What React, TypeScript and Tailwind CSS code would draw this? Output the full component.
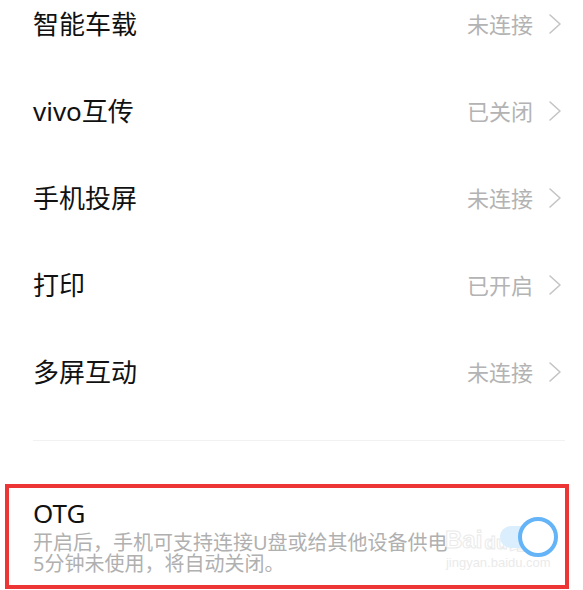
import React from "react";

const rows = [
  { title: "智能车载", value: "未连接" },
  { title: "vivo互传", value: "已关闭" },
  { title: "手机投屏", value: "未连接" },
  { title: "打印", value: "已开启" },
  { title: "多屏互动", value: "未连接" },
];

const font = { fontFamily: '"Noto Sans", "Noto Sans CJK SC", sans-serif' };

function Chevron() {
  return (
    <svg width="15" height="22" viewBox="0 0 15 22" className="shrink-0">
      <path d="M2 2 L12 11 L2 20" fill="none" stroke="#c4c4c4" strokeWidth="1.6" strokeLinecap="round" strokeLinejoin="round" />
    </svg>
  );
}

export default function App() {
  return (
    <div className="w-[583px] h-[590px] overflow-hidden bg-white" style={font}>
      <div className="-mt-[20px]">
        {rows.map((r) => (
          <div key={r.title} className="h-[87px] flex items-center pl-[33px] pr-[20px]">
            <div className="flex-1 text-[26px] leading-none text-[#111]">{r.title}</div>
            <div className="text-[22px] leading-none text-[#b3b3b3] mr-[15px]">{r.value}</div>
            <Chevron />
          </div>
        ))}
      </div>
      <div className="h-[25px]" />
      <div className="ml-[33px] mr-[18px] h-px bg-[#f1f1f1]" />
      <div className="h-[43px]" />
      <div className="relative ml-[5px] w-[564px] h-[105px] border-4 border-[#ee3535] flex items-start pl-[24px] pt-[10px]">
        <div className="flex-1 min-w-0">
          <div className="text-[26px] leading-[30px] text-[#111]">OTG</div>
          <div className="mt-[4px] text-[20px] leading-[21px] text-[#b0b0b0] whitespace-nowrap">
            开启后，手机可支持连接U盘或给其他设备供电
            <br />
            5分钟未使用，将自动关闭。
          </div>
        </div>
        <div className="absolute left-[436px] top-[40px] pointer-events-none flex flex-col items-center opacity-60">
          <div className="flex items-end text-[24px] leading-none font-bold text-white [-webkit-text-stroke:1px_#dddddd]" style={{ fontFamily: '"Liberation Sans", "Noto Sans CJK SC", sans-serif' }}>
            <span>Bai</span>
            <span className="text-[19px] mx-[2px]">du</span>
            <span className="text-[21px]">经验</span>
          </div>
          <div className="mt-[4px] text-[13px] leading-none text-[#dddddd]" style={{ fontFamily: '"Liberation Sans", sans-serif' }}>
            jingyan.baidu.com
          </div>
        </div>
        <div className="relative shrink-0 mt-[19px] mr-[7px] w-[66px] h-[40px] flex items-center">
          <div className="absolute left-[8px] right-[12px] h-[22px] rounded-full bg-[#dbeefd]" />
          <div className="absolute right-0 w-[40px] h-[40px] rounded-full border-[4px] border-[#64b4f7] bg-white" />
        </div>
      </div>
    </div>
  );
}
